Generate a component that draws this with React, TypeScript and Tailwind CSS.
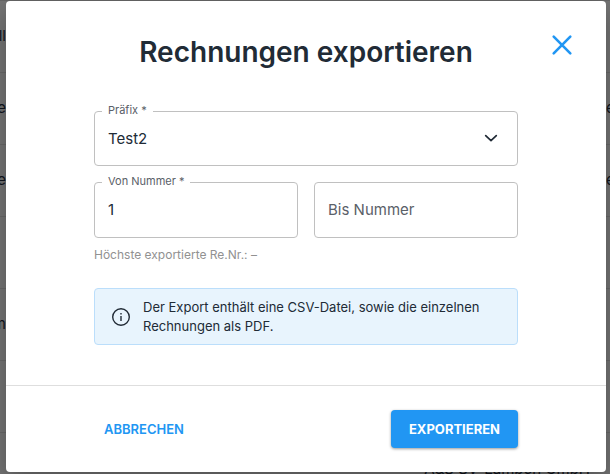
import { useState } from "react";

const rows = [
  { left: "Rechnung ll", right: "" },
  { left: "Rechnung e", right: "e" },
  { left: "Rechnung e", right: "e" },
  { left: "", right: "" },
  { left: "Entwurf m", right: "" },
  { left: "", right: "" },
];

export default function App() {
  const [prefix, setPrefix] = useState("Test2");
  const [from, setFrom] = useState("1");
  const [to, setTo] = useState("");

  return (
    <div className="relative min-h-screen overflow-hidden bg-[#757575] pt-px pr-1 pb-0.5 pl-1.5 font-['Inter',sans-serif] text-[#212b36]">
      {/* Invoice list under the backdrop */}
      <div className="absolute inset-0 border-t border-[#666666]" aria-hidden="true">
        {rows.map((row, i) => (
          <div
            key={i}
            className="flex h-18 items-center justify-between border-b border-[#696969] text-[15px] text-[#10141c]"
          >
            <div className="flex w-1.5 justify-end overflow-hidden whitespace-nowrap">
              <span>{row.left}</span>
            </div>
            <div className="w-1 overflow-hidden">{row.right}</div>
          </div>
        ))}
        <div className="flex h-18 items-center justify-end pr-5 text-[15px] text-[#10141c]">
          A&amp;S SV-Lamben GmbH
        </div>
      </div>

      {/* Dialog */}
      <div
        role="dialog"
        aria-labelledby="export-title"
        className="relative rounded bg-white shadow-[0_10px_24px_rgba(0,0,0,0.3)]"
      >
        <header className="relative px-16 pt-[33px]">
          <h1 id="export-title" className="text-center text-[28px] leading-9 font-semibold">
            Rechnungen exportieren
          </h1>
          <button type="button" aria-label="Schließen" className="absolute top-7 right-7 p-1 text-[#2196f3]">
            <svg className="size-6" viewBox="0 0 24 24" fill="none" stroke="currentColor" strokeWidth="2.6" strokeLinecap="round">
              <path d="M3.7 3.7 20.3 20.3M20.3 3.7 3.7 20.3" />
            </svg>
          </button>
        </header>

        <form className="px-22 pt-[41px] pb-10">
          <div className="relative">
            <select
              id="prefix"
              value={prefix}
              onChange={(e) => setPrefix(e.target.value)}
              className="block h-[55px] w-full appearance-none rounded border border-[#c0c0c0] bg-white px-[13px] pt-0.5 text-[15px]"
            >
              <option value="Test2">Test2</option>
            </select>
            <label
              htmlFor="prefix"
              className="absolute -top-[9px] left-2 bg-white px-1.5 text-[11px] leading-4 text-[#5a6068]"
            >
              Präfix *
            </label>
            <svg
              className="pointer-events-none absolute top-[15px] right-4 size-6"
              viewBox="0 0 24 24"
              fill="none"
              stroke="currentColor"
              strokeWidth="1.7"
              strokeLinecap="round"
              strokeLinejoin="round"
            >
              <path d="M7.7 9.6 13 14.6 18.3 9.6" />
            </svg>
          </div>

          <div className="mt-4 grid grid-cols-2 gap-4">
            <div className="relative">
              <input
                id="from"
                value={from}
                onChange={(e) => setFrom(e.target.value)}
                className="block h-14 w-full rounded border border-[#c0c0c0] px-[13px] pb-0.5 text-[15px]"
              />
              <label
                htmlFor="from"
                className="absolute -top-[9px] left-2 bg-white px-1.5 text-[11px] leading-4 text-[#5a6068]"
              >
                Von Nummer *
              </label>
            </div>
            <input
              aria-label="Bis Nummer"
              placeholder="Bis Nummer"
              value={to}
              onChange={(e) => setTo(e.target.value)}
              className="block h-14 w-full rounded border border-[#c0c0c0] px-[13px] pb-0.5 text-[15px] placeholder:text-[#5a6068]"
            />
          </div>
          <p className="mt-2 text-xs leading-[18px] text-[#919191]">Höchste exportierte Re.Nr.: –</p>

          <div className="mt-6 flex min-h-[57px] items-center gap-3 rounded border border-[#bbdefb] bg-[#e8f4fd] px-4 py-2">
            <svg className="size-5 shrink-0" viewBox="0 0 20 20" fill="none" stroke="currentColor" strokeWidth="1.4">
              <circle cx="10" cy="10" r="8.3" />
              <path d="M10 9v5M10 6v1.6" />
            </svg>
            <p className="text-[13px] leading-[19px]">
              Der Export enthält eine CSV-Datei, sowie die einzelnen Rechnungen als PDF.
            </p>
          </div>
        </form>

        <footer className="flex items-center justify-between border-t border-[#dedede] px-22 py-6">
          <button type="button" className="px-2.5 text-[13px] leading-6 font-semibold text-[#2196f3]">
            ABBRECHEN
          </button>
          <button
            type="button"
            className="h-[38px] rounded bg-[#2196f3] px-[18px] text-[13px] leading-6 font-bold text-white shadow-[0_1px_3px_rgba(0,0,0,0.4)]"
          >
            EXPORTIEREN
          </button>
        </footer>
      </div>
    </div>
  );
}
